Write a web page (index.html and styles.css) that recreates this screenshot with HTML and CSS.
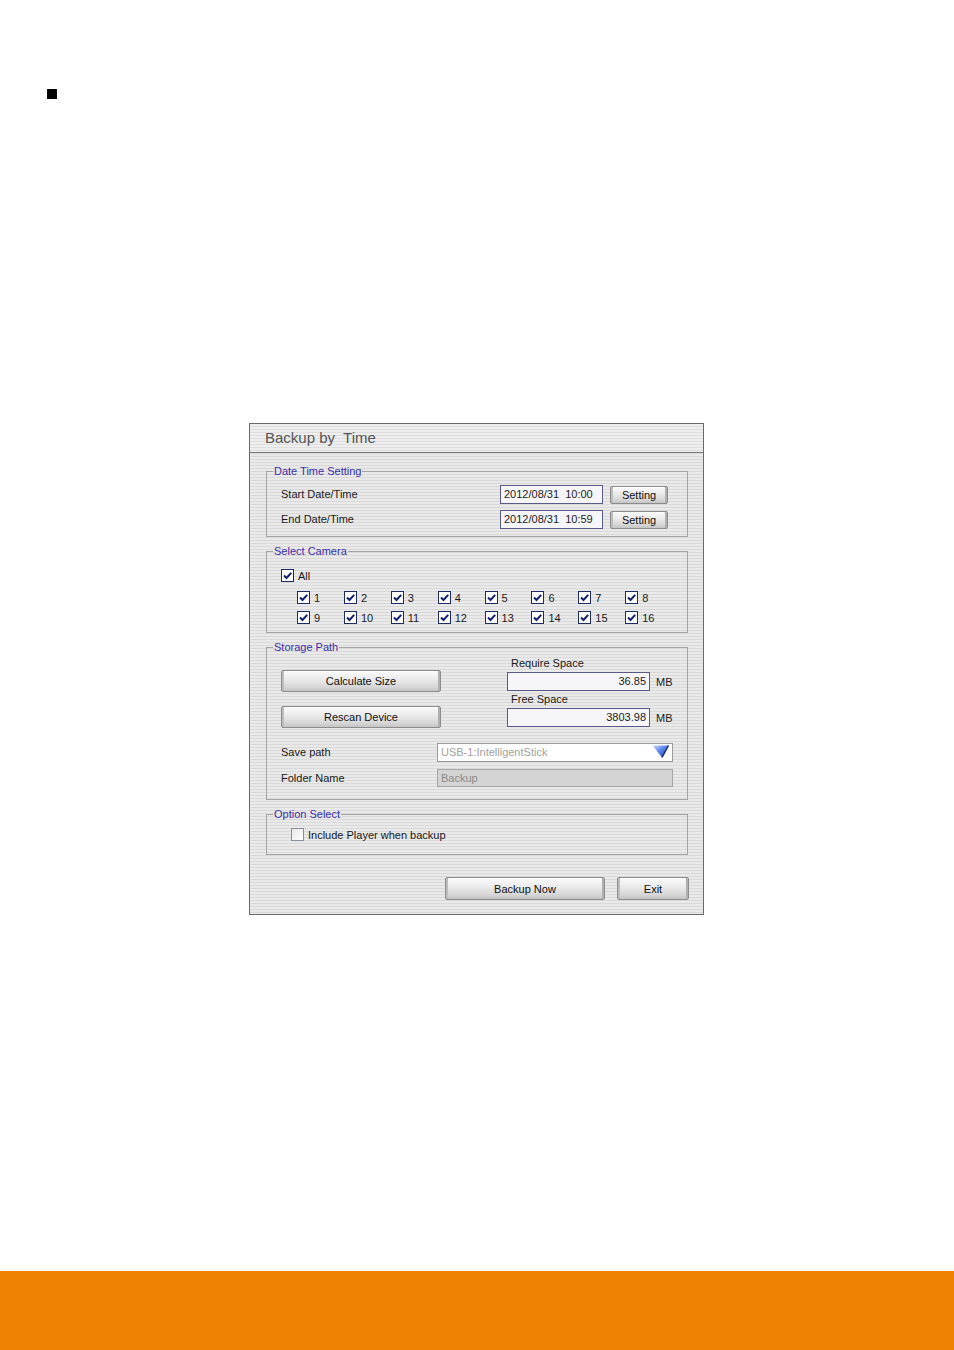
FILE: index.html
```html
<!DOCTYPE html>
<html lang="en">
<head>
    <meta charset="UTF-8">
    <meta name="viewport" content="width=device-width, initial-scale=1.0">
    <title>Backup by Time</title>
    <link rel="stylesheet" href="styles.css">
</head>
<body>
    <div class="page">
        <div class="bullet"></div>

        <div class="window">
            <div class="title-bar">Backup by&nbsp; Time</div>
            <div class="window-body">

                <fieldset class="group group-date">
                    <legend>Date Time Setting</legend>
                    <div class="date-grid">
                        <span class="label">Start Date/Time</span>
                        <span class="field date-field">2012/08/31&nbsp; 10:00</span>
                        <button class="btn btn-setting">Setting</button>
                        <span class="label">End Date/Time</span>
                        <span class="field date-field">2012/08/31&nbsp; 10:59</span>
                        <button class="btn btn-setting">Setting</button>
                    </div>
                </fieldset>

                <fieldset class="group group-camera">
                    <legend>Select Camera</legend>
                    <label class="check check-all"><span class="box checked"></span>All</label>
                    <div class="camera-grid" id="cameraGrid"></div>
                </fieldset>

                <fieldset class="group group-storage">
                    <legend>Storage Path</legend>
                    <div class="storage-top">
                        <div class="btn-col">
                            <button class="btn btn-wide">Calculate Size</button>
                            <button class="btn btn-wide">Rescan Device</button>
                        </div>
                        <div class="space-col">
                            <div class="space-label">Require Space</div>
                            <div class="space-row">
                                <span class="field num-field">36.85</span>
                                <span class="unit">MB</span>
                            </div>
                            <div class="space-label">Free Space</div>
                            <div class="space-row">
                                <span class="field num-field">3803.98</span>
                                <span class="unit">MB</span>
                            </div>
                        </div>
                    </div>
                    <div class="path-grid">
                        <span class="label">Save path</span>
                        <div class="select">
                            <span>USB-1:IntelligentStick</span>
                            <svg class="arrow" width="17" height="13" viewBox="0 0 17 13">
                                <defs>
                                    <linearGradient id="arrowFill" x1="0" y1="0" x2="1" y2="1">
                                        <stop offset="0" stop-color="#cfe0ff"/>
                                        <stop offset="0.45" stop-color="#5b86e8"/>
                                        <stop offset="1" stop-color="#1d3fa8"/>
                                    </linearGradient>
                                </defs>
                                <polygon points="0.5,0.5 16.5,0.5 10,12.5" fill="url(#arrowFill)"/>
                                <polyline points="16.5,0.5 10,12.5" stroke="#10246a" stroke-width="1.4" fill="none"/>
                            </svg>
                        </div>
                        <span class="label">Folder Name</span>
                        <span class="field folder-field">Backup</span>
                    </div>
                </fieldset>

                <fieldset class="group group-option">
                    <legend>Option Select</legend>
                    <label class="check"><span class="box"></span>Include Player when backup</label>
                </fieldset>

                <div class="actions">
                    <button class="btn btn-backup">Backup Now</button>
                    <button class="btn btn-exit">Exit</button>
                </div>
            </div>
        </div>
    </div>
    <div class="footer"></div>

    <script>
        const cameraGrid = document.getElementById('cameraGrid');
        for (let i = 1; i <= 16; i++) {
            const item = document.createElement('label');
            item.className = 'check';
            item.innerHTML = '<span class="box checked"></span>' + i;
            cameraGrid.appendChild(item);
        }
    </script>
</body>
</html>
```

FILE: styles.css
```css
body {
    margin: 0;
    background-color: #fff;
    font-family: "Liberation Sans", Arial, sans-serif;
}

.page {
    height: 1271px;
    padding-top: 89px;
    box-sizing: border-box;
}

.bullet {
    width: 10px;
    height: 10px;
    margin-left: 47px;
    background-color: #000;
}

.footer {
    height: 79px;
    background-color: #ef8200;
}

.window {
    width: 455px;
    margin: 324px 0 0 249px;
    border: 1px solid #6a6a6a;
    box-sizing: border-box;
    background: repeating-linear-gradient(#e9e9e9 0 2px, #d9d9d9 2px 3px);
    font-size: 11px;
    color: #1a1a1a;
}

.title-bar {
    height: 28px;
    line-height: 28px;
    padding-left: 15px;
    font-size: 15px;
    color: #555;
    border-bottom: 1px solid #7a7a7a;
    background: repeating-linear-gradient(#eeeeee 0 2px, #dedede 2px 3px);
}

.window-body {
    padding: 11px 15px 14px 16px;
}

.group {
    margin: 0 0 7px 0;
    border: 1px solid #a4a4a4;
    padding: 0 19px 8px 14px;
    min-width: 0;
}

.group legend {
    margin-left: -8px;
    padding: 0 1px;
    line-height: 14px;
    color: #3a2ea6;
}

.label {
    line-height: 19px;
}

.field {
    display: block;
    box-sizing: border-box;
    height: 19px;
    line-height: 17px;
    border: 1px solid #5a5a88;
    background-color: #f6f6fa;
    padding: 0 3px;
    white-space: nowrap;
}

/* date time */
.group-date {
    padding-top: 7px;
    padding-bottom: 7px;
}

.date-grid {
    display: grid;
    grid-template-columns: 1fr 103px 58px;
    column-gap: 7px;
    row-gap: 6px;
    align-items: center;
}

.btn {
    font-family: inherit;
    font-size: 11px;
    color: #111;
    border: 1px solid #8c8c8c;
    border-radius: 2px;
    padding: 0;
    background: linear-gradient(#fbfbfb, #e9e9e9 45%, #d6d6d6 80%, #c4c4c4);
    box-shadow: inset 2px 0 0 #bdbdbd, inset -2px 0 0 #b0b0b0, inset 0 1px 0 #fff;
    cursor: pointer;
}

.btn-setting {
    height: 18px;
}

/* camera */
.group-camera {
    padding-top: 11px;
}

.check {
    display: flex;
    align-items: center;
    height: 13px;
    gap: 4px;
}

.check-all {
    margin-bottom: 9px;
}

.box {
    width: 13px;
    height: 13px;
    box-sizing: border-box;
    border: 1px solid #8a8ea0;
    background: linear-gradient(135deg, #e8e8e8, #ffffff);
    flex: none;
}

.box.checked {
    border-color: #1e2a62;
    background: #fff url("data:image/svg+xml;utf8,<svg xmlns='http://www.w3.org/2000/svg' width='11' height='11' viewBox='0 0 11 11'><path d='M2 5.5 L4.5 8 L9.2 2.8' stroke='%23142070' stroke-width='2' fill='none'/></svg>") no-repeat center;
}

.camera-grid {
    display: grid;
    grid-template-columns: repeat(8, 46.9px);
    row-gap: 7px;
    padding-left: 16px;
}

/* storage */
.group-storage {
    padding-top: 2px;
    padding-bottom: 11px;
}

.storage-top {
    display: flex;
    gap: 66px;
}

.btn-col {
    display: flex;
    flex-direction: column;
    gap: 14px;
    padding-top: 14px;
}

.btn-wide {
    width: 160px;
    height: 22px;
}

.space-label {
    line-height: 14px;
    padding-left: 4px;
    margin-bottom: 2px;
}

.space-row {
    display: flex;
    align-items: center;
    gap: 6px;
    margin-bottom: 1px;
}

.num-field {
    width: 143px;
    text-align: right;
}

.path-grid {
    display: grid;
    grid-template-columns: 156px 236px;
    row-gap: 7px;
    margin-top: 15px;
}

.select {
    position: relative;
    box-sizing: border-box;
    height: 19px;
    line-height: 17px;
    padding: 0 3px;
    border: 1px solid #9a9a9a;
    background-color: #fff;
    color: #a2a2a2;
}

.select .arrow {
    position: absolute;
    right: 3px;
    top: 1px;
}

.folder-field {
    height: 18px;
    line-height: 16px;
    border-color: #a6a6a6;
    background-color: #d4d4d4;
    color: #8a8a8a;
}

/* option */
.group-option {
    padding-top: 7px;
    padding-left: 24px;
    padding-bottom: 13px;
}

.group-option legend {
    margin-left: -18px;
}

.actions {
    display: flex;
    justify-content: flex-end;
    gap: 12px;
    margin-top: 22px;
    margin-right: -1px;
}

.btn-backup {
    width: 160px;
    height: 23px;
}

.btn-exit {
    width: 72px;
    height: 23px;
}
```
